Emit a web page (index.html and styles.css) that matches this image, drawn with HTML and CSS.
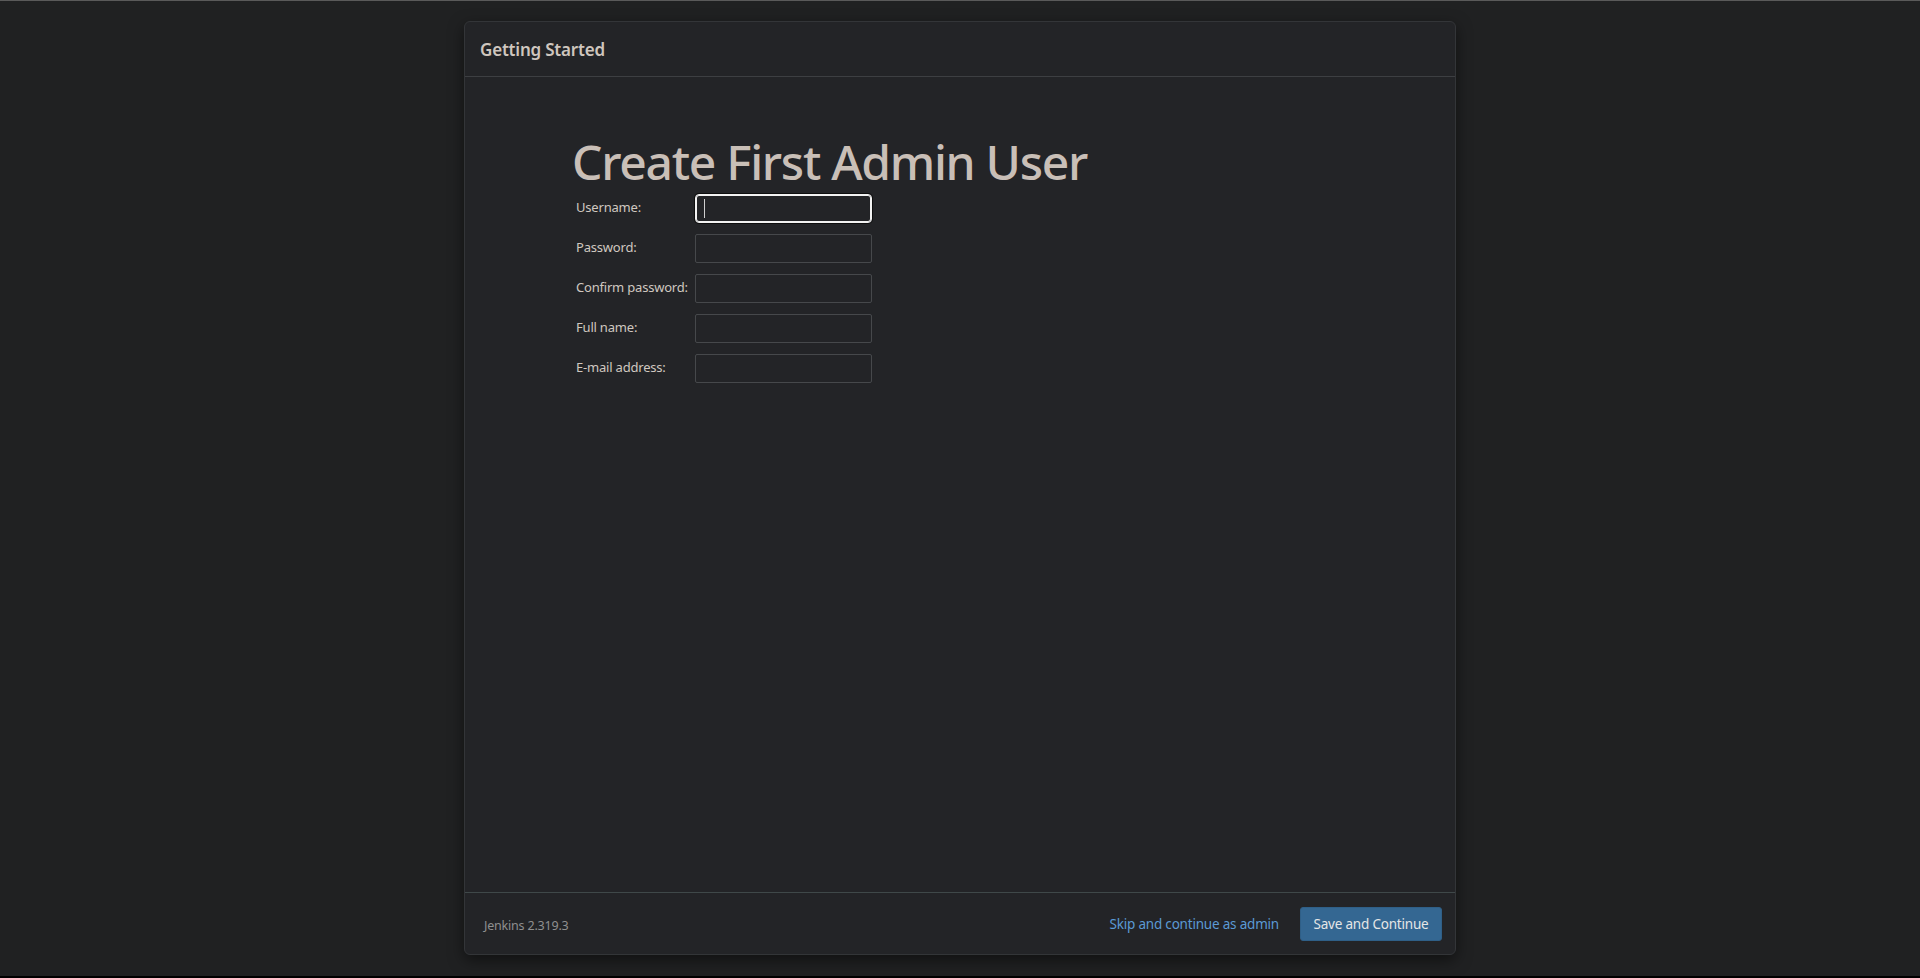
FILE: index.html
```html
<!DOCTYPE html>
<html lang="en">
<head>
<meta charset="utf-8">
<title>Setup Wizard [Jenkins]</title>
<link rel="stylesheet" href="styles.css">
</head>
<body>
<div class="topline"></div>
<div class="modal">
  <div class="modal-header">
    <h4 class="modal-title">Getting Started</h4>
  </div>
  <div class="modal-body">
    <h1 class="page-title">Create First Admin User</h1>
    <form class="admin-form">
      <label class="field-label" for="username">Username:</label>
      <div class="field-wrap">
        <input class="field field-focused" id="username" type="text">
        <span class="caret"></span>
      </div>
      <label class="field-label" for="password1">Password:</label>
      <div class="field-wrap"><input class="field" id="password1" type="password"></div>
      <label class="field-label" for="password2">Confirm password:</label>
      <div class="field-wrap"><input class="field" id="password2" type="password"></div>
      <label class="field-label" for="fullname">Full name:</label>
      <div class="field-wrap"><input class="field" id="fullname" type="text"></div>
      <label class="field-label" for="email">E-mail address:</label>
      <div class="field-wrap"><input class="field" id="email" type="text"></div>
    </form>
  </div>
  <div class="modal-footer">
    <span class="version">Jenkins 2.319.3</span>
    <div class="actions">
      <a class="skip-link" href="#">Skip and continue as admin</a>
      <button class="btn-primary" type="button">Save and Continue</button>
    </div>
  </div>
</div>
<div class="bottomline"></div>
</body>
</html>
```

FILE: styles.css
```css
html, body {
  margin: 0;
  padding: 0;
}
body {
  height: 978px;
  background: #202122;
  font-family: "Noto Sans", "Open Sans", "DejaVu Sans", sans-serif;
  display: flex;
  flex-direction: column;
  overflow: hidden;
}
.topline {
  height: 1px;
  background: #5a5a5a;
  flex: none;
}
.bottomline {
  margin-top: auto;
  height: 2px;
  background: #000;
  flex: none;
}
.modal {
  flex: none;
  width: 992px;
  height: 934px;
  box-sizing: border-box;
  margin: 20px auto 0;
  background: #232427;
  border: 1px solid #333538;
  border-radius: 6px;
  box-shadow: 0 5px 15px rgba(0, 0, 0, 0.5);
  display: flex;
  flex-direction: column;
}
.modal-header {
  height: 54px;
  border-bottom: 1px solid #3d3f42;
  display: flex;
  align-items: center;
  padding: 0 15px;
  flex: none;
}
.modal-title {
  margin: 0;
  font-size: 17px;
  font-weight: 600;
  color: #cfc6be;
  letter-spacing: -0.2px;
}
.modal-body {
  flex: 1;
  padding: 0 0 0 105px;
}
.page-title {
  margin: 55px 0 0 2px;
  font-size: 48px;
  line-height: 60px;
  font-weight: 500;
  color: #c9bfb7;
  letter-spacing: -1.3px;
}
.admin-form {
  margin: 2px 0 0 6px;
  display: grid;
  grid-template-columns: 119px 177px;
  row-gap: 11px;
  align-items: center;
}
.field-label {
  font-size: 13px;
  color: #d0c8c0;
  white-space: nowrap;
  letter-spacing: -0.2px;
  padding-bottom: 3px;
}
.field-wrap {
  position: relative;
  height: 29px;
}
.field {
  display: block;
  width: 177px;
  height: 29px;
  box-sizing: border-box;
  margin: 0;
  padding: 0 8px;
  background: transparent;
  border: 1px solid #46484b;
  border-radius: 2px;
  color: #ddd;
  outline: none;
}
.field-focused {
  border-color: #f2f2f2;
  border-radius: 4px;
  box-shadow: inset 0 0 0 1px #f2f2f2, 0 0 0 1px #0e0e0e;
}
.caret {
  position: absolute;
  left: 9px;
  top: 5px;
  width: 1px;
  height: 19px;
  background: #cfcfcf;
}
.modal-footer {
  flex: none;
  height: 62px;
  border-top: 1px solid #3f4849;
  box-sizing: border-box;
  padding: 0 13px 0 19px;
  display: flex;
  align-items: center;
  justify-content: space-between;
}
.version {
  font-size: 12.5px;
  color: #8f8f8f;
  letter-spacing: -0.2px;
  padding-top: 3px;
}
.actions {
  display: flex;
  align-items: center;
  gap: 21px;
}
.skip-link {
  font-size: 13.5px;
  color: #5b9ad4;
  text-decoration: none;
  letter-spacing: -0.2px;
}
.btn-primary {
  width: 142px;
  height: 34px;
  background: #346792;
  border: 1px solid #2f5f87;
  border-radius: 3px;
  color: #e6e6e6;
  font-family: inherit;
  font-size: 13.5px;
  letter-spacing: -0.2px;
  padding: 0;
}
```
